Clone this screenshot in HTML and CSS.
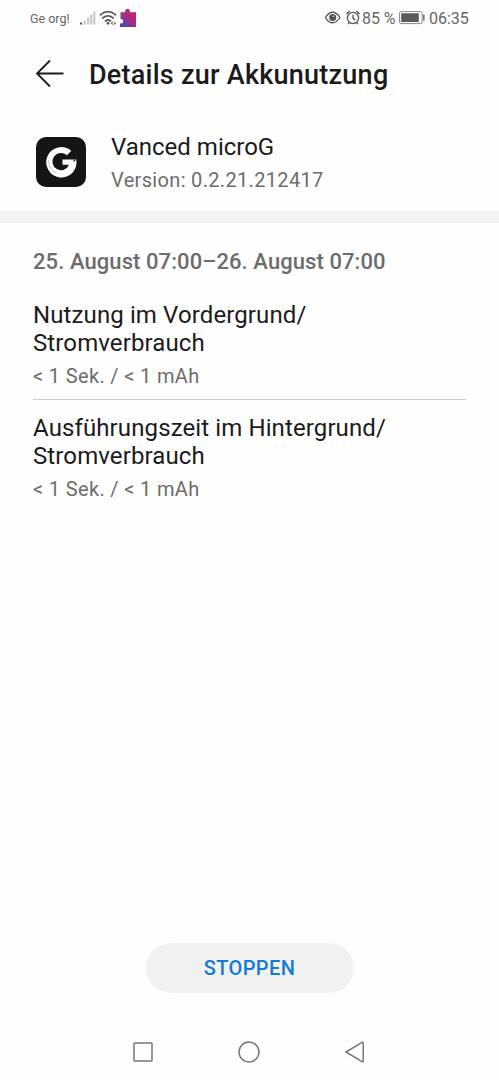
FILE: index.html
```html
<!DOCTYPE html>
<html lang="de">
<head>
<meta charset="utf-8">
<title>Details zur Akkunutzung</title>
<link rel="stylesheet" href="styles.css">
</head>
<body>
<div class="screen">
  <header class="status">
    <span class="carrier">Ge org!</span>
    <svg class="left-icons" width="58" height="20" viewBox="0 0 58 20">
      <path d="M2 14.500h2v2h-2z" fill="#555"/>
      <path d="M5.500 12.500h2.300v4h-2.300zM8.900 9.500h2.300v7h-2.300zM12.100 6.500h2.300v10h-2.300zM15.300 3.500h2.100v13h-2.100z" fill="#cacaca"/>
      <g fill="none" stroke="#5c5c5c" stroke-width="1.700" stroke-linecap="round">
        <path d="M22.300 6.800q7.700-6.500 15.400 0M24.800 10q5.200-4.200 10.400 0M27.500 13q2.500-2 5 0"/>
      </g>
      <circle cx="30" cy="15.300" r="1.400" fill="#555"/>
      <path d="M32.800 15.200l1.800-2v4zM38 15.200l-1.800-2v4z" fill="#555"/>
      <defs><linearGradient id="pz" x1="1" y1="0" x2="0.150" y2="1"><stop offset="0" stop-color="#d01f50"/><stop offset=".48" stop-color="#b02b79"/><stop offset="1" stop-color="#4c42c8"/></linearGradient></defs>
      <path d="M42.500 4.200h4.800a2.400 2.400 0 1 1 4.400 0H58V19H42v-3.500h1a2.300 2.300 0 1 0 0-4.600h-.5z" fill="url(#pz)"/>
    </svg>
    <div class="status-right">
      <svg width="36" height="18" viewBox="0 0 36 18" fill="none" stroke="#555" stroke-width="1.300">
        <path d="M.3 8.500Q7.700-2 15.100 8.500Q7.700 19 .3 8.500z"/>
        <circle cx="7.700" cy="8.500" r="2.900" fill="#555"/><circle cx="8.500" cy="7.300" r=".8" fill="#ddd" stroke="none"/>
        <circle cx="28" cy="9" r="5.600"/><path d="M28 5.800v3.500l2.300 1.700M21.400 5l3.200-3M34.600 5l-3.200-3M24.500 13.400l-1.400 1.700M31.500 13.400l1.400 1.700"/>
      </svg>
      <span class="percent">85 %</span>
      <svg class="battery" width="26" height="14" viewBox="0 0 26 14">
        <rect x=".6" y=".6" width="22.500" height="12" rx="1.500" fill="none" stroke="#888" stroke-width="1"/>
        <path d="M2.200 2.200h17.600v8.800h-17.600zM24.200 3.500h1.300v6.200h-1.300z" fill="#5b5b5b"/>
      </svg>
      <span class="clock">06:35</span>
    </div>
  </header>

  <div class="titlebar">
    <svg width="30" height="30" viewBox="0 0 30 30" fill="none" stroke="#1b1b1b" stroke-width="1.800"><path d="M28.500 14.500H2M15 1.500L2 14.500l13 13"/></svg>
    <h1 class="title">Details zur Akkunutzung</h1>
  </div>

  <section class="app">
    <svg width="50" height="50" viewBox="0 0 50 50">
      <rect width="50" height="50" rx="10" fill="#151517"/>
      <path d="M35.300 13.800A15.200 15.200 0 1 0 40.300 22.500H26.500V27.800H33A8.600 8.600 0 1 1 30.900 18.300z" fill="#fff"/>
      <path d="M12.800 23a13 13 0 0 0 7.500 13" fill="none" stroke="#8d7588" stroke-width=".5"/>
      <path d="M36.500 22.500h3.500l-1.700 2.500z" fill="#693850"/>
    </svg>
    <div class="app-text">
      <div class="app-name">Vanced microG</div>
      <div class="version">Version: 0.2.21.212417</div>
    </div>
  </section>

  <div class="band"></div>

  <main class="usage">
    <h2 class="period">25. August 07:00–26. August 07:00</h2>
    <div class="entry">
      <div class="label">Nutzung im Vordergrund/<br>Stromverbrauch</div>
      <div class="value">&lt; 1 Sek. / &lt; 1 mAh</div>
    </div>
    <div class="entry">
      <div class="label">Ausführungszeit im Hintergrund/<br>Stromverbrauch</div>
      <div class="value">&lt; 1 Sek. / &lt; 1 mAh</div>
    </div>
  </main>

  <footer class="actions"><button class="stop" type="button">STOPPEN</button></footer>

  <nav class="nav">
    <svg width="22" height="22" viewBox="0 0 22 22"><rect x="2" y="2" width="18" height="18" rx=".8"/></svg>
    <svg width="22" height="22" viewBox="0 0 22 22"><circle cx="11" cy="11" r="10"/></svg>
    <svg width="22" height="22" viewBox="0 0 22 22"><path d="M2 11L18.500 1.200Q19.200 1 19.200 1.800V20.200Q19.200 21 18.500 20.800z"/></svg>
  </nav>
</div>
</body>
</html>
```
FILE: styles.css
```css
* { box-sizing: border-box; }
body { margin: 0; background: #fefefe; font-family: Roboto, sans-serif; color: #1b1b1b; }
.screen { width: 499px; height: 1080px; display: flex; flex-direction: column; }
.status { height: 36px; padding: 0 30px; display: flex; align-items: center; color: #666; }
.carrier { width: 48px; font-size: 12.500px; white-space: nowrap; }
.left-icons { margin-top: -1px; }
.status-right { margin-left: auto; display: flex; align-items: center; white-space: nowrap; }
.percent { width: 35px; margin-left: 1px; font-size: 16px; letter-spacing: -.1px; }
.battery { margin: -1px 0 0 2px; }
.clock { width: 40px; margin-left: 4px; font-size: 16px; }
.titlebar { height: 76px; padding-left: 35px; display: flex; align-items: center; gap: 24px; }
.title { margin: 2px 0 0; font-size: 27px; font-weight: 500; line-height: 36px; letter-spacing: .24px; white-space: nowrap; }
.app { height: 99px; padding: 25px 0 0 36px; display: flex; gap: 25px; }
.app-text { margin-top: -5px; }
.app-name { font-size: 24px; line-height: 31px; }
.version { font-size: 20px; line-height: 34px; letter-spacing: .33px; color: #6c6c6c; }
.band { height: 12px; background: #f3f3f3; }
.usage { padding: 0 33px; flex: 1; }
.period { margin: 0; padding-top: 24px; height: 78px; font-size: 22px; line-height: 30px; font-weight: 500; letter-spacing: .08px; color: #6c6c6c; white-space: nowrap; }
.entry { height: 98px; }
.entry + .entry { border-top: 1px solid #ccc; height: 114px; padding-top: 14px; }
.label { font-size: 24px; line-height: 28px; letter-spacing: .11px; }
.value { margin-top: 4px; font-size: 20px; line-height: 30px; letter-spacing: .35px; color: #6c6c6c; }
.actions { height: 81px; display: flex; justify-content: center; }
.stop { width: 208px; height: 50px; padding: 0 6px; border: 0; border-radius: 25px; background: #f1f1f1; color: #137bd5; font: 500 20px Roboto, sans-serif; letter-spacing: .4px; }
.nav { height: 56px; padding: 17px 133px 0 132px; display: flex; justify-content: space-between; }
.nav svg { fill: none; stroke: #777; stroke-width: 1.500; }
```
